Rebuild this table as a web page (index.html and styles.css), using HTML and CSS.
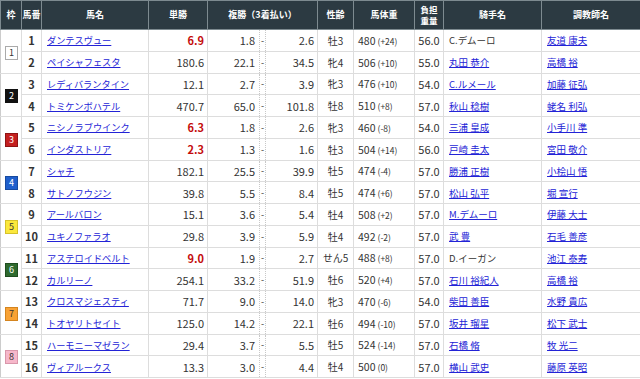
FILE: index.html
```html
<!DOCTYPE html>
<html lang="ja">
<head>
  <meta charset="UTF-8" />
  <title>レース結果</title>
  <link rel="stylesheet" href="styles.css">
</head>
<body>
  <table class="result">
    <colgroup>
      <col class="c-waku"><col class="c-num"><col class="c-name"><col class="c-win">
      <col class="c-plo"><col class="c-psep"><col class="c-phi">
      <col class="c-sex"><col class="c-wt"><col class="c-load"><col class="c-jockey"><col class="c-trainer">
    </colgroup>
    <thead>
      <tr>
        <th>枠</th>
        <th>馬番</th>
        <th>馬名</th>
        <th>単勝</th>
        <th colspan="3">複勝（3着払い）</th>
        <th>性齢</th>
        <th>馬体重</th>
        <th class="two-line"><span>負担</span><span>重量</span></th>
        <th>騎手名</th>
        <th>調教師名</th>
      </tr>
    </thead>
    <tbody>
      <tr>
        <td rowspan="2" class="waku"><span class="badge w1">1</span></td>
        <td class="num">1</td>
        <td class="name"><a href="#">ダンテスヴュー</a></td>
        <td class="odds hot">6.9</td>
        <td class="plo">1.8</td><td class="psep">-</td><td class="phi">2.6</td>
        <td class="sex">牡3</td>
        <td class="wt">480<small>(+24)</small></td>
        <td class="load">56.0</td>
        <td class="person">C.デムーロ</td>
        <td class="person"><a href="#">友道 康夫</a></td>
      </tr>
      <tr>
        <td class="num">2</td>
        <td class="name"><a href="#">ペイシャフェスタ</a></td>
        <td class="odds">180.6</td>
        <td class="plo">22.1</td><td class="psep">-</td><td class="phi">34.5</td>
        <td class="sex">牝4</td>
        <td class="wt">506<small>(+10)</small></td>
        <td class="load">55.0</td>
        <td class="person"><a href="#">丸田 恭介</a></td>
        <td class="person"><a href="#">高橋 裕</a></td>
      </tr>
      <tr>
        <td rowspan="2" class="waku"><span class="badge w2">2</span></td>
        <td class="num">3</td>
        <td class="name"><a href="#">レディバランタイン</a></td>
        <td class="odds">12.1</td>
        <td class="plo">2.7</td><td class="psep">-</td><td class="phi">3.9</td>
        <td class="sex">牝3</td>
        <td class="wt">476<small>(+10)</small></td>
        <td class="load">54.0</td>
        <td class="person"><a href="#">C.ルメール</a></td>
        <td class="person"><a href="#">加藤 征弘</a></td>
      </tr>
      <tr>
        <td class="num">4</td>
        <td class="name"><a href="#">トミケンボハテル</a></td>
        <td class="odds">470.7</td>
        <td class="plo">65.0</td><td class="psep">-</td><td class="phi">101.8</td>
        <td class="sex">牡8</td>
        <td class="wt">510<small>(+8)</small></td>
        <td class="load">57.0</td>
        <td class="person"><a href="#">秋山 稔樹</a></td>
        <td class="person"><a href="#">蛯名 利弘</a></td>
      </tr>
      <tr>
        <td rowspan="2" class="waku"><span class="badge w3">3</span></td>
        <td class="num">5</td>
        <td class="name"><a href="#">ニシノラブウインク</a></td>
        <td class="odds hot">6.3</td>
        <td class="plo">1.8</td><td class="psep">-</td><td class="phi">2.6</td>
        <td class="sex">牝3</td>
        <td class="wt">460<small>(-8)</small></td>
        <td class="load">54.0</td>
        <td class="person"><a href="#">三浦 皇成</a></td>
        <td class="person"><a href="#">小手川 準</a></td>
      </tr>
      <tr>
        <td class="num">6</td>
        <td class="name"><a href="#">インダストリア</a></td>
        <td class="odds hot">2.3</td>
        <td class="plo">1.3</td><td class="psep">-</td><td class="phi">1.6</td>
        <td class="sex">牡3</td>
        <td class="wt">504<small>(+14)</small></td>
        <td class="load">56.0</td>
        <td class="person"><a href="#">戸崎 圭太</a></td>
        <td class="person"><a href="#">宮田 敬介</a></td>
      </tr>
      <tr>
        <td rowspan="2" class="waku"><span class="badge w4">4</span></td>
        <td class="num">7</td>
        <td class="name"><a href="#">シャチ</a></td>
        <td class="odds">182.1</td>
        <td class="plo">25.5</td><td class="psep">-</td><td class="phi">39.9</td>
        <td class="sex">牡5</td>
        <td class="wt">474<small>(-4)</small></td>
        <td class="load">57.0</td>
        <td class="person"><a href="#">勝浦 正樹</a></td>
        <td class="person"><a href="#">小桧山 悟</a></td>
      </tr>
      <tr>
        <td class="num">8</td>
        <td class="name"><a href="#">サトノフウジン</a></td>
        <td class="odds">39.8</td>
        <td class="plo">5.5</td><td class="psep">-</td><td class="phi">8.4</td>
        <td class="sex">牡5</td>
        <td class="wt">474<small>(+6)</small></td>
        <td class="load">57.0</td>
        <td class="person"><a href="#">松山 弘平</a></td>
        <td class="person"><a href="#">堀 宣行</a></td>
      </tr>
      <tr>
        <td rowspan="2" class="waku"><span class="badge w5">5</span></td>
        <td class="num">9</td>
        <td class="name"><a href="#">アールバロン</a></td>
        <td class="odds">15.1</td>
        <td class="plo">3.6</td><td class="psep">-</td><td class="phi">5.4</td>
        <td class="sex">牡4</td>
        <td class="wt">508<small>(+2)</small></td>
        <td class="load">57.0</td>
        <td class="person"><a href="#">M.デムーロ</a></td>
        <td class="person"><a href="#">伊藤 大士</a></td>
      </tr>
      <tr>
        <td class="num">10</td>
        <td class="name"><a href="#">ユキノファラオ</a></td>
        <td class="odds">29.8</td>
        <td class="plo">3.9</td><td class="psep">-</td><td class="phi">5.9</td>
        <td class="sex">牡4</td>
        <td class="wt">492<small>(-2)</small></td>
        <td class="load">57.0</td>
        <td class="person"><a href="#">武 豊</a></td>
        <td class="person"><a href="#">石毛 善彦</a></td>
      </tr>
      <tr>
        <td rowspan="2" class="waku"><span class="badge w6">6</span></td>
        <td class="num">11</td>
        <td class="name"><a href="#">アステロイドベルト</a></td>
        <td class="odds hot">9.0</td>
        <td class="plo">1.9</td><td class="psep">-</td><td class="phi">2.7</td>
        <td class="sex">せん5</td>
        <td class="wt">488<small>(+8)</small></td>
        <td class="load">57.0</td>
        <td class="person">D.イーガン</td>
        <td class="person"><a href="#">池江 泰寿</a></td>
      </tr>
      <tr>
        <td class="num">12</td>
        <td class="name"><a href="#">カルリーノ</a></td>
        <td class="odds">254.1</td>
        <td class="plo">33.2</td><td class="psep">-</td><td class="phi">51.9</td>
        <td class="sex">牡6</td>
        <td class="wt">520<small>(+4)</small></td>
        <td class="load">57.0</td>
        <td class="person"><a href="#">石川 裕紀人</a></td>
        <td class="person"><a href="#">高橋 裕</a></td>
      </tr>
      <tr>
        <td rowspan="2" class="waku"><span class="badge w7">7</span></td>
        <td class="num">13</td>
        <td class="name"><a href="#">クロスマジェスティ</a></td>
        <td class="odds">71.7</td>
        <td class="plo">9.0</td><td class="psep">-</td><td class="phi">14.0</td>
        <td class="sex">牝3</td>
        <td class="wt">470<small>(-6)</small></td>
        <td class="load">54.0</td>
        <td class="person"><a href="#">柴田 善臣</a></td>
        <td class="person"><a href="#">水野 貴広</a></td>
      </tr>
      <tr>
        <td class="num">14</td>
        <td class="name"><a href="#">トオヤリトセイト</a></td>
        <td class="odds">125.0</td>
        <td class="plo">14.2</td><td class="psep">-</td><td class="phi">22.1</td>
        <td class="sex">牡6</td>
        <td class="wt">494<small>(-10)</small></td>
        <td class="load">57.0</td>
        <td class="person"><a href="#">坂井 瑠星</a></td>
        <td class="person"><a href="#">松下 武士</a></td>
      </tr>
      <tr>
        <td rowspan="2" class="waku"><span class="badge w8">8</span></td>
        <td class="num">15</td>
        <td class="name"><a href="#">ハーモニーマゼラン</a></td>
        <td class="odds">29.4</td>
        <td class="plo">3.7</td><td class="psep">-</td><td class="phi">5.5</td>
        <td class="sex">牡5</td>
        <td class="wt">524<small>(-14)</small></td>
        <td class="load">57.0</td>
        <td class="person"><a href="#">石橋 脩</a></td>
        <td class="person"><a href="#">牧 光二</a></td>
      </tr>
      <tr>
        <td class="num">16</td>
        <td class="name"><a href="#">ヴィアルークス</a></td>
        <td class="odds">13.3</td>
        <td class="plo">3.0</td><td class="psep">-</td><td class="phi">4.4</td>
        <td class="sex">牡4</td>
        <td class="wt">500<small>(0)</small></td>
        <td class="load">57.0</td>
        <td class="person"><a href="#">横山 武史</a></td>
        <td class="person"><a href="#">藤原 英昭</a></td>
      </tr>
    </tbody>
  </table>
</body>
</html>
```

FILE: styles.css
```css
body {
  margin: 0;
  font-family: "Noto Sans CJK JP", "Noto Sans", sans-serif;
  color: #333;
  background: #fff;
}
.result {
  width: 640px;
  border-collapse: collapse;
  table-layout: fixed;
  border-left: 1px solid #ccc;
  border-right: 1px solid #ccc;
}
.c-waku { width: 21px; }
.c-num { width: 20px; }
.c-name { width: 107px; }
.c-win { width: 59px; }
.c-plo { width: 52px; }
.c-psep { width: 6px; }
.c-phi { width: 52px; }
.c-sex { width: 36px; }
.c-wt { width: 61px; }
.c-load { width: 29px; }
.c-jockey { width: 98px; }
.c-trainer { width: 99px; }

.result th {
  background-color: #2c3a42;
  color: #fff;
  font-size: 9px;
  font-weight: bold;
  height: 28px;
  padding: 0;
  border: 1px solid #7d8a90;
  line-height: 1.2;
}
.two-line span {
  display: block;
  font-size: 8.5px;
  line-height: 11px;
}
.result td {
  height: 20.75px;
  padding: 0 4px;
  border-bottom: 1px solid #ddd;
  border-right: 1px solid #ddd;
  font-size: 11px;
  white-space: nowrap;
  overflow: hidden;
}
.result a {
  color: #2323d6;
}

.waku {
  text-align: center;
  vertical-align: middle;
}
.badge {
  display: inline-block;
  box-sizing: border-box;
  width: 13px;
  height: 14px;
  line-height: 12px;
  font-size: 9px;
  border: 1px solid;
  vertical-align: middle;
}
.w1 { background: #fff; border-color: #aaa; color: #333; }
.w2 { background: #111; border-color: #111; color: #fff; }
.w3 { background: #c41f1f; border-color: #8e1414; color: #fff; }
.w4 { background: #1f5fcc; border-color: #174a9f; color: #fff; }
.w5 { background: #fbe83c; border-color: #d6c22a; color: #333; }
.w6 { background: #2e6a2e; border-color: #1f4d1f; color: #fff; }
.w7 { background: #f8a235; border-color: #d4841e; color: #333; }
.w8 { background: #f6b7ca; border-color: #d996aa; color: #333; }

.result td.num {
  text-align: center;
  font-weight: bold;
  padding: 0;
}
.result td.name {
  font-size: 9.2px;
  padding-left: 5px;
}
.odds {
  text-align: right;
}
.result td.odds {
  padding-right: 3px;
}
.hot {
  color: #c40c0c;
  font-weight: bold;
}
.result td.plo {
  text-align: right;
  border-right: 1px dotted #c8c8c8;
}
.result td.psep {
  padding: 0;
  text-align: center;
  font-size: 9px;
  border-right: 1px dotted #c8c8c8;
}
.result td.phi {
  text-align: right;
  padding-right: 3px;
}
.result td.sex {
  text-align: center;
  font-size: 10px;
  padding: 0;
}
.result td.wt {
  font-size: 10.5px;
}
.wt small {
  font-size: 8.5px;
  margin-left: 2px;
}
.result td.load {
  text-align: center;
  padding: 0;
}
.result td.person {
  font-size: 9.5px;
  padding-left: 5px;
}
```
